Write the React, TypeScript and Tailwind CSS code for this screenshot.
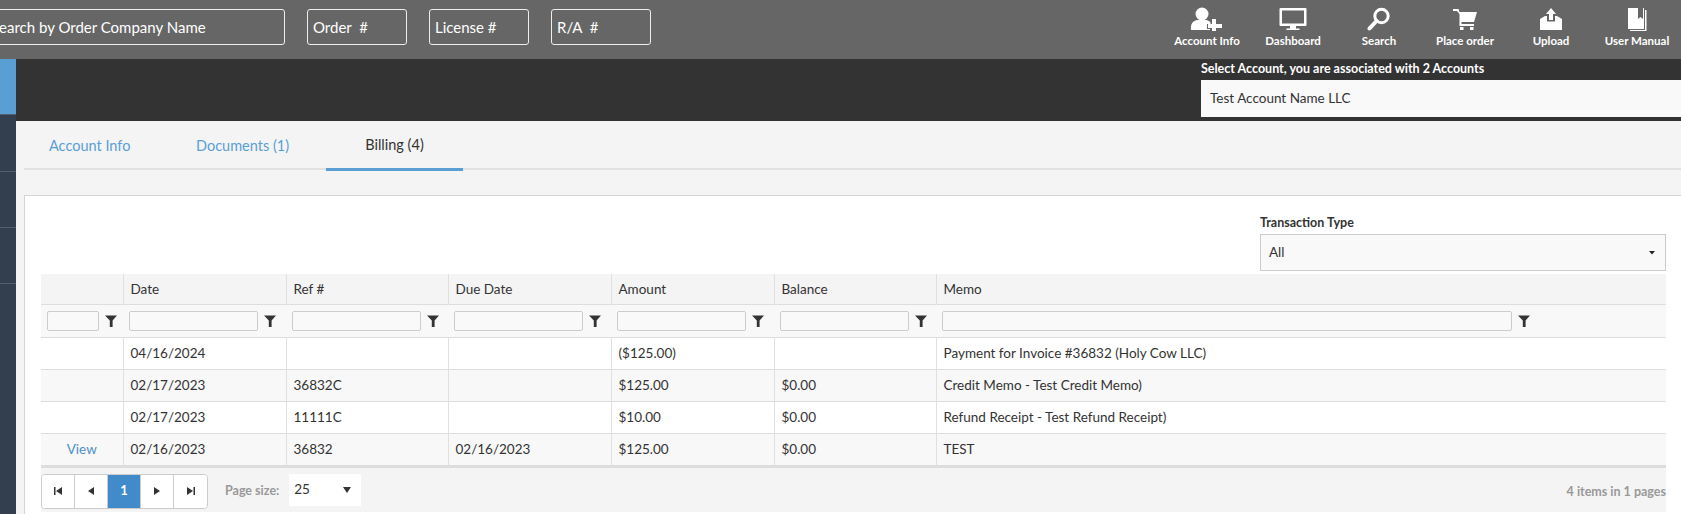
import React from "react";

const font = { fontFamily: '"Lato", "Noto Sans", sans-serif' };

const Funnel = () => (
  <svg width="12" height="12" viewBox="0 0 12 12" className="shrink-0 fill-[#333]">
    <path d="M0 0.5h12L7.6 5.5V12H4.8V5.5z" />
  </svg>
);

const navIcons: Record<string, React.ReactNode> = {
  "Account Info": (
    <svg width="34" height="24" viewBox="0 0 34 24" className="fill-white">
      <ellipse cx="12" cy="7" rx="6.5" ry="6.5" />
      <path d="M1 23c-.6-6 1.5-9 6-10h9c2 .4 3.5 1.2 4.5 2.4V17H17v5h3v1z" />
      <path d="M22 12h4v5h6v4h-6v3h-4v-3h-4v-4h4z" />
    </svg>
  ),
  Dashboard: (
    <svg width="28" height="24" viewBox="0 0 28 24" className="fill-white">
      <path fillRule="evenodd" d="M1.5 1h25a1 1 0 0 1 1 1v16a1 1 0 0 1-1 1h-25a1 1 0 0 1-1-1V2a1 1 0 0 1 1-1zM3 3.5V16.500h22V3.500z" />
      <path d="M11 19h6v2.500h3.500V23h-13v-1.500H11z" />
    </svg>
  ),
  Search: (
    <svg width="24" height="24" viewBox="0 0 24 24" fill="none" className="stroke-white">
      <circle cx="14.500" cy="9" r="6.700" strokeWidth="3" />
      <path d="M9.500 14L2.500 21.500" strokeWidth="4" strokeLinecap="round" />
    </svg>
  ),
  "Place order": (
    <svg width="24" height="24" viewBox="0 0 24 24" className="fill-white">
      <path d="M0 2h5.500l1 3H24l-3 10H8.500v2H21v2H6.500V7L4 4H0z" />
      <rect x="7" y="20" width="3.500" height="3" />
      <rect x="17" y="20" width="3.500" height="3" />
    </svg>
  ),
  Upload: (
    <svg width="24" height="24" viewBox="0 0 24 24" className="fill-white">
      <path d="M12 1l5 6h-3v6h-4V7H7z" />
      <path d="M1 12l5-3h2v5.500h8V9h2l5 3v11H1z" />
    </svg>
  ),
  "User Manual": (
    <svg width="20" height="24" viewBox="0 0 20 24" className="fill-white">
      <path d="M1 1h10v11l2.500-2 2.500 2V1h1v21H1z" />
      <path d="M18 3h1.500v21H3v-1h15z" />
    </svg>
  ),
};

const rows = [
  ["", "04/16/2024", "", "", "($125.00)", "", "Payment for Invoice #36832 (Holy Cow LLC)"],
  ["", "02/17/2023", "36832C", "", "$125.00", "$0.00", "Credit Memo - Test Credit Memo)"],
  ["", "02/17/2023", "11111C", "", "$10.00", "$0.00", "Refund Receipt - Test Refund Receipt)"],
  ["View", "02/16/2023", "36832", "02/16/2023", "$125.00", "$0.00", "TEST"],
];

const heads = ["", "Date", "Ref #", "Due Date", "Amount", "Balance", "Memo"];
const widths = ["w-[82px]", "w-[163px]", "w-[162px]", "w-[163px]", "w-[163px]", "w-[162px]", "w-[730px]"];

const TopInput = ({ label, className }: { label: string; className: string }) => (
  <div className={`flex h-[36px] items-center rounded-[3px] border border-[#eee] pl-[5px] text-[15px] text-white ${className}`}>
    <span className="whitespace-pre">{label}</span>
  </div>
);

const PagerButton = ({ children, active, last }: { children: React.ReactNode; active?: boolean; last?: boolean }) => (
  <div
    className={`flex h-[33px] w-[33px] items-center justify-center text-[13px] font-bold ${last ? "" : "border-r border-[#ccc]"} ${active ? "bg-[#428bca] text-white" : "bg-white text-[#333]"}`}
  >
    {children}
  </div>
);

const Tri = ({ d }: { d: string }) => (
  <svg width="8" height="8" viewBox="0 0 8 8" className="fill-[#333]">
    <path d={d} />
  </svg>
);

export default function App() {
  return (
    <div style={font} className="flex h-[514px] w-[1681px] flex-col overflow-hidden bg-[#f4f4f4] text-[13px] text-[#333]">
      <header className="flex h-[59px] shrink-0 items-start justify-between bg-[#666]">
        <div className="flex items-start pt-[9px]">
          <TopInput label="Search by Order Company Name" className="ml-[-15px] w-[300px]" />
          <TopInput label="Order  #" className="ml-[22px] w-[100px]" />
          <TopInput label="License #" className="ml-[22px] w-[100px]" />
          <TopInput label="R/A  #" className="ml-[22px] w-[100px]" />
        </div>
        <nav className="mr-[1px] flex">
          {Object.keys(navIcons).map((name) => (
            <div key={name} className="flex w-[86px] flex-col items-center pt-[6px]">
              <div className="flex h-[25px] items-center">{navIcons[name]}</div>
              <span className="mt-[3px] whitespace-nowrap text-[11.5px] font-bold leading-[14px] text-white">{name}</span>
            </div>
          ))}
        </nav>
      </header>

      <div className="flex min-h-0 flex-1">
        <aside className="flex w-[16px] shrink-0 flex-col bg-[#333f4f]">
          <div className="h-[55px] bg-[#5a9fd4]" />
          <div className="h-[57px] border-t border-[#55606e]" />
          <div className="h-[56px] border-t border-[#55606e]" />
          <div className="h-[57px] border-y border-[#55606e]" />
        </aside>

        <main className="min-w-0 flex-1 overflow-hidden">
          <div className="flex h-[62px] justify-end bg-[#333]">
            <div className="w-[480px] shrink-0">
              <div className="h-[21px] pt-[2px] text-[12.5px] font-bold leading-[16px] text-white">
                Select Account, you are associated with 2 Accounts
              </div>
              <div className="flex h-[37px] items-center bg-[#f9f9f9] pl-[9px] text-[13.5px]">Test Account Name LLC</div>
            </div>
          </div>

          <div className="ml-[8px] flex h-[49px] border-b-2 border-[#e2e2e2] text-[14.5px]">
            <div className="ml-[25px] flex h-[49px] w-[147px] items-center text-[#5a9fd4]">Account Info</div>
            <div className="flex h-[49px] w-[130px] items-center text-[#5a9fd4]">Documents (1)</div>
            <div className="flex h-[50px] w-[137px] items-center justify-center border-b-[3px] border-[#5a9fd4] text-[#333]">Billing (4)</div>
          </div>

          <section className="ml-[8px] mr-[-20px] mt-[25px] h-[400px] border border-[#d5d5d5] bg-white pl-[16px]">
            <div className="flex h-[78px] w-[1625px] justify-end pt-[18px]">
              <div className="w-[406px]">
                <div className="h-[20px] text-[12.5px] font-bold leading-[18px]">Transaction Type</div>
                <div className="flex h-[37px] items-center justify-between border border-[#ccc] bg-[#f9f9f9] pl-[8px] pr-[10px] text-[13.5px]">
                  <span>All</span>
                  <svg width="6" height="4" viewBox="0 0 6 4" className="fill-[#222]">
                    <path d="M0 0h6L3 3.500z" />
                  </svg>
                </div>
              </div>
            </div>

            <div className="w-[1625px] bg-[#f4f4f4]">
              <table className="w-[1625px] table-fixed border-collapse text-[13.5px]">
                <thead>
                  <tr className="h-[30px] border-b border-[#ddd] bg-[#f4f4f4] text-left">
                    {heads.map((h, i) => (
                      <th key={i} className={`${widths[i]} border-l border-[#e0e0e0] pl-[7px] font-normal first:border-l-0`}>
                        {h}
                      </th>
                    ))}
                  </tr>
                  <tr className="h-[33px] border-b border-[#ddd] bg-[#f8f8f8]">
                    {heads.map((_, i) => (
                      <td key={i} className="px-[6px]">
                        <div className="flex items-center gap-[6px]">
                          <div
                            className={`h-[20px] rounded-[2px] border border-[#ccc] bg-[#f9f9f9] ${i === 0 ? "w-[56px]" : i === 6 ? "w-[570px]" : "w-[129px]"}`}
                          />
                          <Funnel />
                        </div>
                      </td>
                    ))}
                  </tr>
                </thead>
                <tbody>
                  {rows.map((row, r) => (
                    <tr key={r} className={`h-[32px] border-b border-[#ddd] ${r % 2 ? "bg-[#f8f8f8]" : "bg-white"}`}>
                      {row.map((c, i) => (
                        <td
                          key={i}
                          className={`border-l border-[#e0e0e0] first:border-l-0 ${i === 0 ? "text-center text-[#4d8fcc]" : "pl-[7px]"}`}
                        >
                          {c}
                        </td>
                      ))}
                    </tr>
                  ))}
                </tbody>
              </table>

              <div className="flex h-[46px] items-start justify-between border-t-2 border-[#ddd] pt-[6px]">
                <div className="flex items-start">
                  <div className="flex overflow-hidden rounded-[4px] border border-[#ccc]">
                    <PagerButton>
                      <Tri d="M0 0h1.500v8H0zM8 0v8L2 4z" />
                    </PagerButton>
                    <PagerButton>
                      <Tri d="M7 0v8L1 4z" />
                    </PagerButton>
                    <PagerButton active>1</PagerButton>
                    <PagerButton>
                      <Tri d="M1 0v8l6-4z" />
                    </PagerButton>
                    <PagerButton last>
                      <Tri d="M0 0v8l6-4zM6.500 0H8v8H6.500z" />
                    </PagerButton>
                  </div>
                  <span className="ml-[17px] mt-[9px] text-[12.5px] font-bold leading-[16px] text-[#999]">Page size:</span>
                  <div className="ml-[10px] flex h-[32px] w-[72px] items-center justify-between bg-white pl-[5px] pr-[10px] text-[13.5px]">
                    <span>25</span>
                    <svg width="8" height="6" viewBox="0 0 8 6" className="fill-[#333]">
                      <path d="M0 0h8L4 6z" />
                    </svg>
                  </div>
                </div>
                <span className="mt-[10px] text-[12.5px] font-bold leading-[16px] text-[#999]">
                  4 items in 1 pages
                </span>
              </div>
            </div>
          </section>
        </main>
      </div>
    </div>
  );
}
